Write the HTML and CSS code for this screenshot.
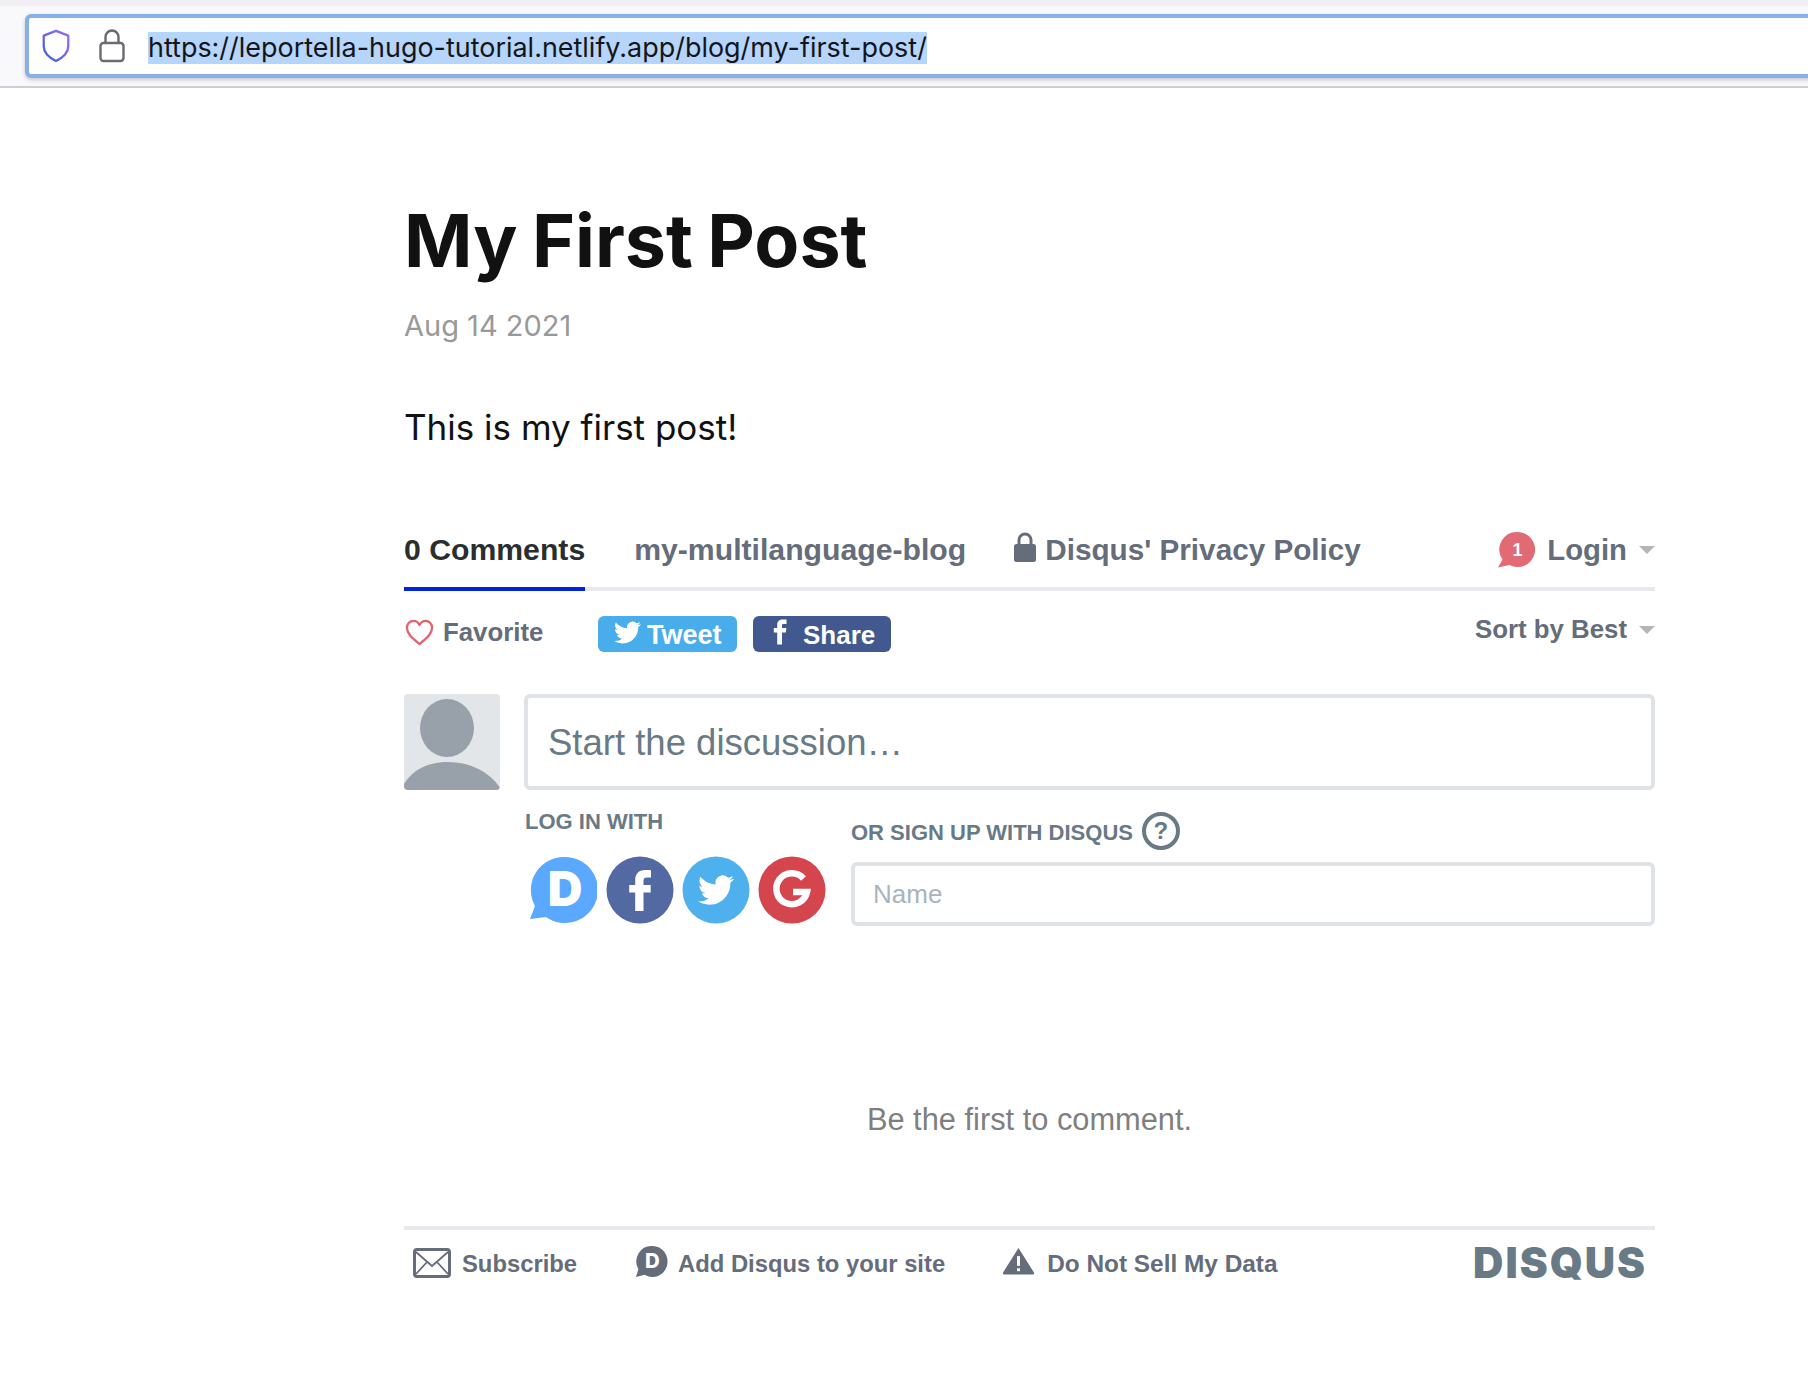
FILE: index.html
```html
<!DOCTYPE html>
<html lang="en">
<head>
<meta charset="utf-8">
<title>My First Post</title>
<link rel="stylesheet" href="styles.css">
</head>
<body>
<header class="chrome">
  <div class="urlbar">
    <svg class="ic-shield" viewBox="0 0 30 36"><defs><linearGradient id="sg" x1="1" y1="0" x2="0" y2="1"><stop offset="0" stop-color="#9a6cf0"/><stop offset="1" stop-color="#3a5fe0"/></linearGradient></defs><path d="M15 2 L28 7 V18 C28 26 21 31 15 34 C9 31 2 26 2 18 V7 Z" fill="none" stroke="url(#sg)" stroke-width="2.4" stroke-linejoin="round"/></svg>
    <svg class="ic-lock" viewBox="0 0 26 34"><path d="M6.500 14V8a6.500 6.500 0 0 1 13 0v6" fill="none" stroke="#6a6a6f" stroke-width="2.400"/><rect x="1.500" y="14" width="23" height="18" rx="3" fill="none" stroke="#6a6a6f" stroke-width="2.400"/></svg>
    <span class="url"><span class="url-sel">https://leportella-hugo-tutorial.netlify.app/blog/my-first-post/</span></span>
  </div>
</header>
<main class="content">
  <h1 class="title">My First Post</h1>
  <div class="date">Aug 14 2021</div>
  <p class="body-text">This is my first post!</p>

  <section class="disqus">
    <nav class="tabs">
      <a class="tab tab-active">0 Comments</a>
      <a class="tab tab-forum">my-multilanguage-blog</a>
      <a class="tab tab-privacy">
        <svg class="ic-plock" viewBox="0 0 22 30"><path d="M5 13V8a6 6 0 0 1 12 0v5" fill="none" stroke="#656c7a" stroke-width="3"/><rect x="0" y="12" width="22" height="18" rx="2.500" fill="#656c7a"/></svg>
        Disqus' Privacy Policy
      </a>
      <a class="tab tab-login">
        <svg class="badge" viewBox="0 0 38 38"><path d="M20.500 1a17.500 17.500 0 1 1-8 33L1 36.500l4.500-8A17.500 17.500 0 0 1 20.500 1z" fill="#e26a75"/><text class="badge-num" x="20.500" y="25" text-anchor="middle">1</text></svg>
        Login
        <span class="caret"></span>
      </a>
    </nav>

    <div class="actions">
      <a class="favorite">
        <svg class="ic-heart" viewBox="0 0 30 28"><path d="M15 26 C8 20 2 15.500 2 9 C2 4.800 5.200 2 8.600 2 C11.300 2 13.700 3.500 15 6.200 C16.300 3.500 18.700 2 21.400 2 C24.800 2 28 4.800 28 9 C28 15.500 22 20 15 26 Z" fill="none" stroke="#e0636f" stroke-width="2.400" stroke-linejoin="round"/></svg>
        Favorite
      </a>
      <a class="share share-tw">
        <svg class="ic-btn-tw" viewBox="0 0 24 24"><path fill="#fff" d="M23.953 4.570a10 10 0 0 1-2.825.775 4.958 4.958 0 0 0 2.163-2.723c-.951.555-2.005.959-3.127 1.184a4.920 4.920 0 0 0-8.384 4.482C7.690 8.095 4.067 6.130 1.640 3.162a4.822 4.822 0 0 0-.666 2.475c0 1.710.870 3.213 2.188 4.096a4.904 4.904 0 0 1-2.228-.616v.060a4.923 4.923 0 0 0 3.946 4.827 4.996 4.996 0 0 1-2.212.085 4.936 4.936 0 0 0 4.604 3.417 9.867 9.867 0 0 1-6.102 2.105c-.390 0-.779-.023-1.170-.067a13.995 13.995 0 0 0 7.557 2.209c9.053 0 13.998-7.496 13.998-13.985 0-.210 0-.420-.015-.630A9.935 9.935 0 0 0 24 4.590z"/></svg>
        <span class="share-text">Tweet</span>
      </a>
      <a class="share share-fb">
        <svg class="ic-btn-fb" viewBox="0 0 14 26"><path fill="#fff" d="M9 9V6.400c0-1.100.7-1.500 1.400-1.500H13.500V0.500L9.600 0.500C5.500 0.500 4.200 3.200 4.200 5.800V9H0.800v4.500h3.400V25.500H9V13.500h3.800l.6-4.500H9z"/></svg>
        <span class="share-text">Share</span>
      </a>
      <a class="sort">Sort by Best<span class="caret"></span></a>
    </div>

    <div class="composer">
      <div class="avatar">
        <svg class="avatar-svg" viewBox="0 0 96 96"><rect width="96" height="96" fill="#e2e6e9"/><ellipse cx="43" cy="34" rx="27" ry="29" fill="#98a1aa"/><path d="M0 96 V90 C10 74 26 68 44 68 C66 68 86 78 96 94 V96 Z" fill="#98a1aa"/></svg>
      </div>
      <div class="composer-main">
        <div class="textbox">Start the discussion…</div>
        <div class="auth">
          <div class="auth-login">
            <div class="auth-label">LOG IN WITH</div>
            <div class="auth-icons">
              <svg class="auth-ic auth-ic-first" viewBox="0 0 68 68"><path d="M36 1a33 33 0 1 1-19 60l-16 2 5-13A33 33 0 0 1 36 1z" fill="#5aa8ff"/><text class="d-letter" x="36" y="50" text-anchor="middle">D</text></svg>
              <svg class="auth-ic" viewBox="0 0 68 68"><circle cx="34" cy="34" r="33.500" fill="#5269a2"/><path fill="#fff" d="M37.500 55V36.500h7.200v-7.500h-7.200v-4.200c0-2.300 1-3.400 3.400-3.400h4.100v-7.100c-2-.3-3.700-.4-5.800-.4-6.600 0-10 3.900-10 10.300v4.800h-6v7.500h6V55z"/></svg>
              <svg class="auth-ic" viewBox="0 0 68 68"><circle cx="34" cy="34" r="33.500" fill="#4eb1ee"/><g transform="translate(16 16) scale(1.500)"><path fill="#fff" d="M23.953 4.570a10 10 0 0 1-2.825.775 4.958 4.958 0 0 0 2.163-2.723c-.951.555-2.005.959-3.127 1.184a4.920 4.920 0 0 0-8.384 4.482C7.690 8.095 4.067 6.130 1.640 3.162a4.822 4.822 0 0 0-.666 2.475c0 1.710.870 3.213 2.188 4.096a4.904 4.904 0 0 1-2.228-.616v.060a4.923 4.923 0 0 0 3.946 4.827 4.996 4.996 0 0 1-2.212.085 4.936 4.936 0 0 0 4.604 3.417 9.867 9.867 0 0 1-6.102 2.105c-.390 0-.779-.023-1.170-.067a13.995 13.995 0 0 0 7.557 2.209c9.053 0 13.998-7.496 13.998-13.985 0-.210 0-.420-.015-.630A9.935 9.935 0 0 0 24 4.590z"/></g></svg>
              <svg class="auth-ic" viewBox="0 0 68 68"><circle cx="34" cy="34" r="33.500" fill="#d5454d"/><path d="M45.500 22.500A15.500 15.500 0 1 0 49 36H35" fill="none" stroke="#fff" stroke-width="6.500"/></svg>
            </div>
          </div>
          <div class="auth-signup">
            <div class="signup-label">OR SIGN UP WITH DISQUS <span class="help">?</span></div>
            <div class="namebox">Name</div>
          </div>
        </div>
      </div>
    </div>

    <p class="empty">Be the first to comment.</p>

    <footer class="foot">
      <a class="foot-link foot-sub">
        <svg class="ic-mail" viewBox="0 0 38 30"><rect x="1.500" y="1.500" width="35" height="27" rx="2.500" fill="none" stroke="#656c7a" stroke-width="3"/><path d="M3 4 L19 18 L35 4 M3 26 L14 14 M35 26 L24 14" fill="none" stroke="#656c7a" stroke-width="1.800"/></svg>
        Subscribe
      </a>
      <a class="foot-link foot-add">
        <svg class="ic-disq" viewBox="0 0 34 34"><path d="M18 1a15.500 16 0 1 1-8 29.700L1 33l2.500-8A15.500 16 0 0 1 18 1z" fill="#656c7a"/><text class="d-small" x="18" y="24" text-anchor="middle">D</text></svg>
        Add Disqus to your site
      </a>
      <a class="foot-link foot-warn">
        <svg class="ic-warn" viewBox="0 0 34 30"><path d="M17 1.500 L33 27 a1.500 1.500 0 0 1-1.300 2H2.300A1.500 1.500 0 0 1 1 27z" fill="#656c7a"/><rect x="15.500" y="10" width="3" height="10" fill="#fff"/><rect x="15.500" y="22.500" width="3" height="3" fill="#fff"/></svg>
        Do Not Sell My Data
      </a>
      <span class="wordmark">DISQUS</span>
    </footer>
  </section>
</main>
</body>
</html>
```

FILE: styles.css
```css
* { box-sizing: border-box; }
html, body { margin: 0; padding: 0; background: #fff; }
body { width: 1808px; height: 1394px; overflow: hidden; font-family: "Liberation Sans", Arial, sans-serif; }

.chrome { height: 88px; background: #f9f9fb; border-top: 6px solid #f0f0f4; border-bottom: 2px solid #cfcfd3; padding: 8px 0 0 25px; overflow: hidden; }
.urlbar { width: 1900px; height: 64px; background: #fff; border: 4px solid #88b0e8; border-radius: 6px; box-shadow: 0 2px 4px rgba(0,0,0,.2); display: flex; align-items: center; padding-left: 12px; }
.ic-shield { width: 30px; height: 34px; flex: none; }
.ic-lock { width: 26px; height: 34px; flex: none; margin-left: 28px; }
.url { margin-left: 23px; padding-top: 2px; font-family: Inter, sans-serif; font-size: 26.950px; color: #15141a; }
.url-sel { background: #b5d5fb; display: inline-block; line-height: 32px; }

.content { width: 1251px; margin-left: 404px; }
.title { margin: 109px 0 0; font-family: Inter, sans-serif; font-weight: 700; font-size: 73.500px; word-spacing: -3px; line-height: 88px; color: #111; }
.date { margin-top: 21px; font-family: Inter, sans-serif; font-size: 29px; line-height: 40px; color: #999; }
.body-text { margin: 59px 0 0; font-family: Inter, sans-serif; font-size: 35px; line-height: 44px; color: #111; }

.disqus { margin-top: 70px; }
.tabs { display: flex; align-items: stretch; height: 72px; border-bottom: 4px solid #e7e9ee; font-size: 30.200px; font-weight: 700; color: #656c7a; }
.tab { display: flex; align-items: center; height: 72px; padding-bottom: 10px; }
.tab-active { padding-bottom: 6px; color: #2a2e2e; border-bottom: 4px solid #0022dd; }
.tab-forum { margin-left: 49px; }
.tab-privacy { gap: 9px; margin-left: 48px; font-size: 29.700px; }
.ic-plock { width: 22px; height: 30px; margin-top: -6px; }
.tab-login { margin-left: auto; font-size: 29.300px; }
.badge { width: 38px; height: 38px; margin-right: 12px; margin-top: -1px; flex: none; }
.badge-num { font-size: 18px; font-weight: 700; fill: #fff; }
.caret { display: inline-block; width: 0; height: 0; margin-left: 12px; border-left: 8px solid transparent; border-right: 8px solid transparent; border-top: 8px solid #b5b5b5; }

.actions { display: flex; align-items: center; height: 36px; margin-top: 25px; font-size: 25.800px; font-weight: 700; color: #656c7a; }
.favorite { display: flex; align-items: center; gap: 9px; width: 194px; margin-top: -3px; padding-left: 1px; }
.ic-heart { width: 29px; height: 27px; }
.share { display: flex; align-items: center; height: 36px; border-radius: 6px; color: #fff; font-size: 27px; }
.share-text { padding-top: 3px; }
.share-tw { width: 139px; background: #48adea; padding-left: 16px; gap: 6px; }
.share-fb { width: 138px; margin-left: 16px; background: #41598f; padding-left: 20px; gap: 16px; font-size: 26px; }
.ic-btn-tw { width: 27px; height: 27px; margin-top: -4px; }
.ic-btn-fb { width: 14px; height: 26px; margin-top: -4px; }
.sort { display: flex; align-items: center; margin-left: auto; margin-top: -9px; }

.composer { display: flex; gap: 25px; margin-top: 42px; }
.avatar { width: 96px; height: 96px; flex: none; border-radius: 4px; overflow: hidden; }
.avatar-svg { display: block; width: 96px; height: 96px; }
.composer-main { flex: 1; min-width: 0; }
.textbox { height: 96px; margin-left: -1px; border: 4px solid #dfe2e6; border-radius: 6px; padding-left: 20px; padding-top: 2px; display: flex; align-items: center; font-size: 36.500px; color: #687a86; }
.auth { display: flex; }
.auth-login { width: 326px; flex: none; }
.auth-label { margin-top: 19px; font-size: 22px; line-height: 26px; font-weight: 700; color: #687a86; }
.auth-icons { display: flex; gap: 8px; margin-top: 21px; padding-left: 4px; }
.auth-ic { width: 68px; height: 68px; flex: none; }
.auth-ic-first { margin-right: 1px; }
.d-letter { font-family: Inter, sans-serif; font-weight: 900; font-size: 48px; fill: #fff; }
.d-small { font-family: Inter, sans-serif; font-weight: 800; font-size: 21px; fill: #fff; }
.auth-signup { flex: 1; }
.signup-label { display: flex; align-items: center; gap: 9px; margin-top: 23px; height: 38px; font-size: 22px; font-weight: 700; color: #687a86; padding-top: 2px; }
.help { width: 38px; height: 38px; border: 4px solid #687a86; border-radius: 50%; display: flex; align-items: center; justify-content: center; font-size: 24px; margin-top: -4px; }
.namebox { height: 64px; margin-top: 11px; border: 4px solid #dfe2e6; border-radius: 6px; padding-left: 18px; display: flex; align-items: center; font-size: 26px; color: #aab4bc; }

.empty { margin: 176px 0 0; height: 36px; line-height: 36px; text-align: center; font-size: 30.800px; color: #7f7f7f; }

.foot { display: flex; align-items: center; height: 70px; margin-top: 88px; border-top: 4px solid #e7e9ee; font-size: 23.800px; font-weight: 700; color: #656c7a; }
.foot-link { display: flex; align-items: center; padding-top: 2px; }
.foot-sub { margin-left: 9px; gap: 11px; }
.foot-add { margin-left: 58px; gap: 10px; }
.foot-warn { margin-left: 57px; gap: 12px; font-size: 24.400px; }
.ic-mail { width: 38px; height: 30px; margin-top: -2px; }
.ic-disq { width: 33px; height: 33px; margin-top: -6px; }
.ic-warn { width: 33px; height: 30px; margin-top: -6px; }
.wordmark { margin-left: auto; margin-right: 8px; font-family: Inter, sans-serif; font-weight: 900; font-size: 42px; line-height: 44px; color: #687a86; letter-spacing: 2px; }
```
